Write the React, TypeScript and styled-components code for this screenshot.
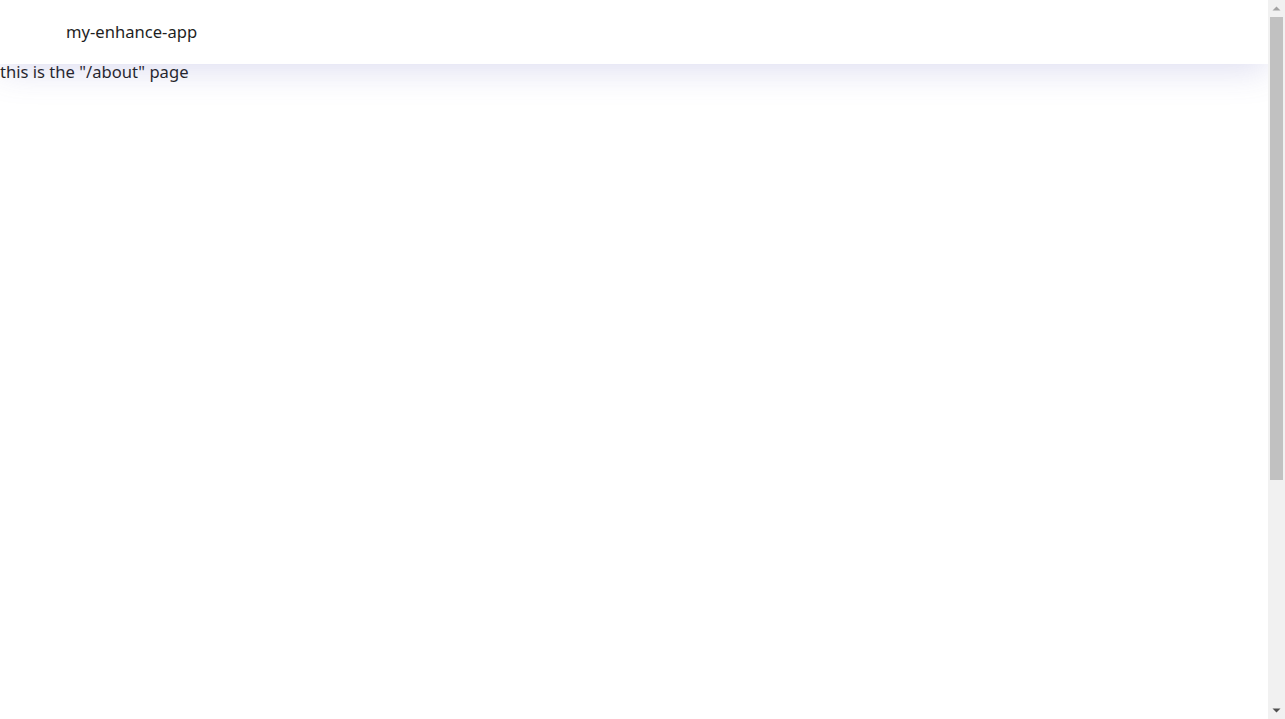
import React from "react";
import styled, { createGlobalStyle } from "styled-components";

const Global = createGlobalStyle`
  html, body { margin: 0; padding: 0; background: #fff; height: 100%; overflow: hidden; }
  body { font-family: "Noto Sans", "Noto Sans CJK SC", sans-serif; color: #1f1f1f; }
`;

const Frame = styled.div`
  display: flex;
  height: 100vh;
`;

const Viewport = styled.div`
  flex: 1;
  min-width: 0;
  overflow: hidden;
`;

const Page = styled.div`
  min-height: 1064px;
  display: flex;
  flex-direction: column;
`;

const Header = styled.header`
  height: 64px;
  display: flex;
  align-items: center;
  padding-left: 66px;
  background: #fff;
  box-shadow: 0 4px 36px rgba(100, 100, 190, 0.24);
  position: relative;
  z-index: 1;
`;

const Title = styled.span`
  font-size: 16.6px;
  line-height: 24px;
`;

const Main = styled.main`
  flex: 1;
  font-size: 16.6px;
  line-height: 16px;
`;

const ScrollRail = styled.div`
  width: 17px;
  flex: 0 0 17px;
  background: #f1f1f1;
  display: flex;
  flex-direction: column;
`;

const ArrowButton = styled.div`
  height: 17px;
  flex: 0 0 17px;
  display: flex;
  align-items: center;
  justify-content: center;
`;

const Track = styled.div`
  flex: 1;
  display: flex;
  flex-direction: column;
  padding: 0 2px;
`;

const Thumb = styled.div`
  height: 463px;
  background: #c1c1c1;
`;

const Arrow = ({ down, color }: { down?: boolean; color: string }) => (
  <svg width="9" height="5" viewBox="0 0 9 5">
    {down ? (
      <polygon points="0.5,0.5 8.5,0.5 4.5,4.5" fill={color} />
    ) : (
      <polygon points="4.5,0.5 8.5,4.5 0.5,4.5" fill={color} />
    )}
  </svg>
);

export default function App() {
  return (
    <>
      <Global />
      <Frame>
        <Viewport>
          <Page>
            <Header>
              <Title>my-enhance-app</Title>
            </Header>
            <Main>this is the "/about" page</Main>
          </Page>
        </Viewport>
        <ScrollRail>
          <ArrowButton>
            <Arrow color="#a3a3a3" />
          </ArrowButton>
          <Track>
            <Thumb />
          </Track>
          <ArrowButton>
            <Arrow down color="#505050" />
          </ArrowButton>
        </ScrollRail>
      </Frame>
    </>
  );
}
